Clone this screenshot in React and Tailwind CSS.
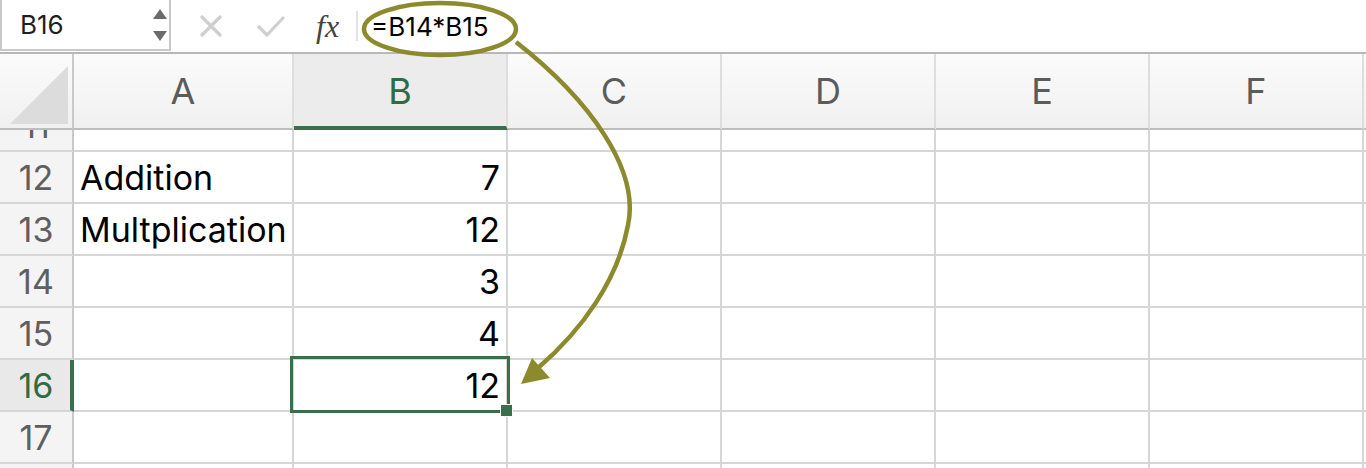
const COLS = [
  { key: 'A', w: 'w-[220px]' },
  { key: 'B', w: 'w-[214px]' },
  { key: 'C', w: 'w-[214px]' },
  { key: 'D', w: 'w-[214px]' },
  { key: 'E', w: 'w-[214px]' },
  { key: 'F', w: 'w-[214px]' },
]

const ROWS = [
  { n: 11 },
  { n: 12, a: 'Addition', b: '7' },
  { n: 13, a: 'Multplication', b: '12' },
  { n: 14, b: '3' },
  { n: 15, b: '4' },
  { n: 16, b: '12', active: true },
  { n: 17 },
  { n: 18 },
]

function FormulaBar() {
  return (
    <div className="flex h-[54px] border-b-2 border-[#b8b8b8] bg-white">
      {/* Name box */}
      <div className="flex h-[51px] w-[171px] items-center justify-between border-x-2 border-b-2 border-[#c9c9c9] pl-[18px] pr-[2px]">
        <span className="text-[26px] text-[#1f1f1f]">B16</span>
        <div className="flex flex-col gap-[12px]">
          <svg width="14" height="10" viewBox="0 0 14 10"><polygon points="7,0 14,10 0,10" fill="#6b6b6b" /></svg>
          <svg width="14" height="10" viewBox="0 0 14 10"><polygon points="0,0 14,0 7,10" fill="#6b6b6b" /></svg>
        </div>
      </div>

      {/* Cancel / enter / fx */}
      <div className="flex items-center pl-[29px]">
        <svg width="22" height="22" viewBox="0 0 22 22">
          <path d="M2 2 L20 20 M20 2 L2 20" stroke="#cfcfcf" strokeWidth="3.2" strokeLinecap="round" />
        </svg>
        <svg width="28" height="22" viewBox="0 0 28 22" className="ml-[35px]">
          <path d="M2 12 L10 20 L26 3" stroke="#cfcfcf" strokeWidth="3.2" fill="none" strokeLinecap="round" strokeLinejoin="round" />
        </svg>
        <span className="ml-[31px] font-['Liberation_Serif',serif] text-[32px] italic leading-none text-[#444]">fx</span>
        <div className="ml-[17px] h-[30px] w-[2px] bg-[#e2e2e2]" />
        <span className="ml-[13px] text-[26px] text-black">=B14*B15</span>
      </div>
    </div>
  )
}

function HeaderRow() {
  return (
    <div className="flex h-[76px] bg-linear-to-b from-[#fbfbfb] to-[#f0f0f0]">
      <div className="flex w-[74px] items-end border-r-2 border-b-2 border-r-[#c9c9c9] border-b-[#bdbdbd] pb-[4px] pl-[10px]">
        <svg width="58" height="58" viewBox="0 0 58 58"><polygon points="58,0 58,58 0,58" fill="#dcdcdc" /></svg>
      </div>
      {COLS.map((c) =>
        c.key === 'B' ? (
          <div key={c.key} className={`${c.w} flex items-center justify-center border-r-2 border-b-4 border-r-[#dedede] border-b-[#3a7049] bg-[#ececec] pt-[2px] text-[36px] text-[#2f6b45]`}>
            {c.key}
          </div>
        ) : (
          <div key={c.key} className={`${c.w} flex items-center justify-center border-r-2 border-b-2 border-r-[#dedede] border-b-[#bdbdbd] text-[36px] text-[#5b5b5b]`}>
            {c.key}
          </div>
        )
      )}
      <div className="flex-1 border-b-2 border-[#bdbdbd]" />
    </div>
  )
}

function Row({ r, first }) {
  return (
    <div className={`flex h-[52px] shrink-0 ${first ? '-mt-[30px]' : ''}`}>
      <div
        className={`flex w-[74px] items-center justify-center border-b-2 border-b-[#d6d6d6] text-[34px] ${
          r.active
            ? 'border-r-4 border-r-[#3a7049] bg-[#e9e9e9] pl-[2px] text-[#2f6b45]'
            : 'border-r-2 border-r-[#c9c9c9] bg-[#f4f4f4] text-[#5f5f5f]'
        }`}
      >
        {r.n}
      </div>
      {COLS.map((c) => (
        <div
          key={c.key}
          className={`${c.w} relative flex items-center border-r-2 border-b-2 border-[#d6d6d6] text-[34px] text-black ${
            c.key === 'A' ? 'justify-start pl-[6px]' : 'justify-end pr-[6px]'
          } ${c.key === 'B' && r.active ? 'z-10' : ''}`}
        >
          <span className="whitespace-nowrap">{c.key === 'A' ? r.a : c.key === 'B' ? r.b : ''}</span>
          {c.key === 'B' && r.active && (
            <>
              <div className="absolute -top-[4px] -right-[4px] -bottom-[3px] -left-[4px] border-[3px] border-[#3a7049]" />
              <div className="absolute -right-[6px] -bottom-[6px] h-[11px] w-[11px] bg-[#3a7049] ring-1 ring-white" />
            </>
          )}
        </div>
      ))}
      <div className="flex-1 border-b-2 border-[#d6d6d6]" />
    </div>
  )
}

export default function App() {
  return (
    <div className="relative flex h-[468px] w-[1366px] flex-col overflow-hidden bg-white font-['Inter',sans-serif]">
      <FormulaBar />
      <HeaderRow />
      <div className="flex min-h-0 flex-1 flex-col overflow-hidden">
        {ROWS.map((r, i) => (
          <Row key={r.n} r={r} first={i === 0} />
        ))}
      </div>

      {/* annotation */}
      <svg className="pointer-events-none absolute top-0 left-0" width="1366" height="468" viewBox="0 0 1366 468">
        <ellipse cx="440" cy="29" rx="76" ry="26" fill="none" stroke="#8b8a2c" strokeWidth="4.5" />
        <path d="M516 42 C590 100 640 170 628 225 C618 280 582 330 538 368" fill="none" stroke="#8b8a2c" strokeWidth="4.5" />
        <polygon points="521,384 532,358 550,378" fill="#8b8a2c" />
      </svg>
    </div>
  )
}
